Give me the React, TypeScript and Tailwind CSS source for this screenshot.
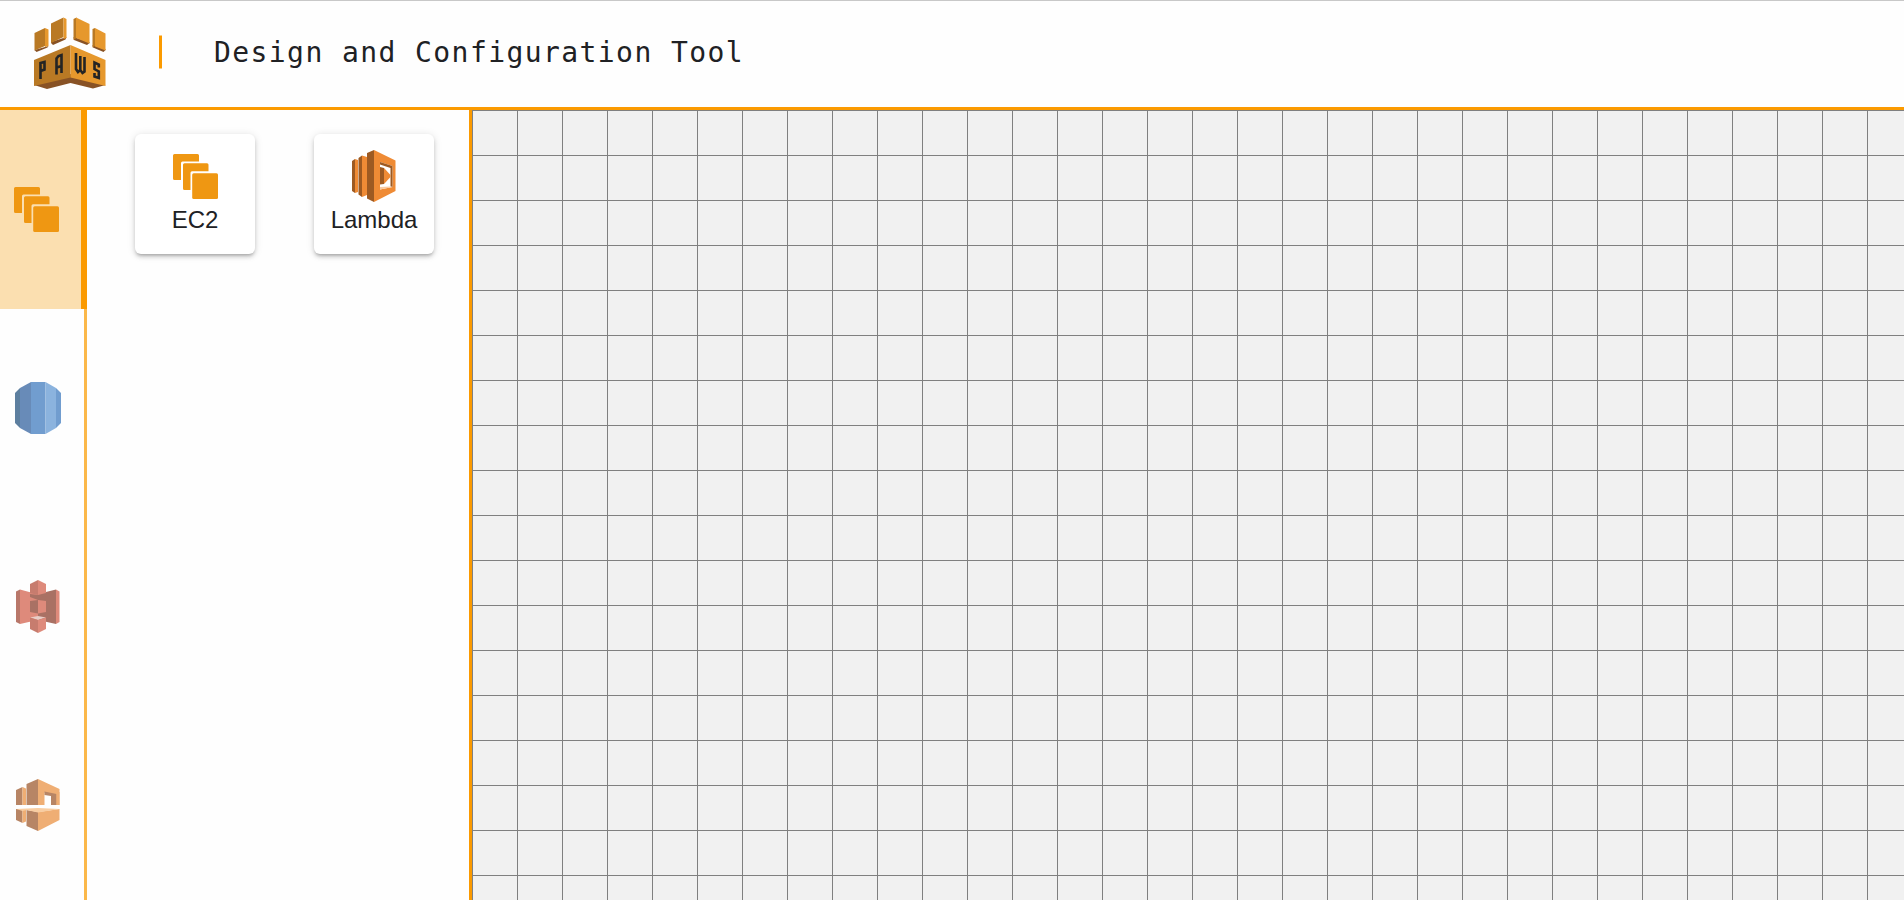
import type { ReactNode } from 'react';

const ORANGE = '#ef9712';

function Ec2Icon() {
  return (
    <svg className="block h-[46px] w-[46px]" viewBox="0 0 46 46" fill={ORANGE}>
      <path d="M1.500 0H24.500Q26 0 26 1.500V7.500H9.500Q8 7.500 8 9V26H1.500Q0 26 0 24.500V1.500Q0 0 1.500 0Z" />
      <path d="M11.500 9.300H34Q35.500 9.300 35.500 10.800V17.300H19Q17.500 17.300 17.500 18.800V36H11.500Q10 36 10 34.500V10.800Q10 9.300 11.500 9.300Z" />
      <rect x="19.200" y="19.200" width="25.800" height="25.800" rx="1.500" />
    </svg>
  );
}

function LambdaIcon() {
  return (
    <svg className="block h-[52px] w-[44px]" viewBox="0 0 44 52">
      <path fill="#9d5a22" d="M0 11L3 9V43L0 41ZM6.500 8L10 5.500V47L6.500 44.500ZM15 3L22 0V52L15 48.500Z" />
      <path fill="#ef8b35" d="M3 9L6 10V42L3 43ZM10 5.500L15 7V45L10 47Z" />
      <path fill="#ef8b35" fillRule="evenodd" d="M22 0L43.500 10.500V41L22 52ZM28 12V39.500L40.500 37V16Z" />
      <path fill="#9d5a22" d="M28 12L40.500 16V37L38.500 36.500V18L28 14.500ZM28 17L32 18V34L28 34.500Z" />
      <path fill="#ef8b35" d="M32 18L38.500 25V27L32 34Z" />
      <path fill="#f9caa0" d="M28 37L38.500 36.500L40.500 37L28 39.500Z" />
    </svg>
  );
}

function DatabaseIcon() {
  return (
    <svg className="block h-[52px] w-[46px]" viewBox="0 0 46 52">
      <path fill="#5d7f9f" d="M0 11L5 6V46L0 41Z" />
      <path fill="#688bb8" d="M5 6L16 0V52L5 46Z" />
      <path fill="#719dcf" d="M16 0H30.500V52H16Z" />
      <path fill="#8bb3de" d="M30.500 0L41 6V46L30.500 52Z" />
      <path fill="#719dcf" d="M41 6L46 11V41L41 46Z" />
    </svg>
  );
}

function StorageIcon() {
  return (
    <svg className="ml-px block h-[53px] w-[44px]" viewBox="0 0 44 53">
      <path fill="#b8776a" d="M0 11.500L4 9.500V44L0 42Z" />
      <path fill="#de8a7b" d="M4 9.500L15 12.500V41.500L4 44Z" />
      <path fill="#de8a7b" d="M14 12L22 14V40L14 42Z" />
      <path fill="#a97164" d="M22 14L40 9.500V44L22 40Z" />
      <path fill="#de8a7b" d="M40 9.500L43.500 11.500V42L40 44Z" />
      <path fill="#a97164" d="M14 14L22 15L30 17V19L22 20L14 17Z" />
      <path fill="#c77c6e" d="M14 4L22 0V15L14 13Z" />
      <path fill="#de8a7b" d="M22 0L30 4V13L22 15Z" />
      <path fill="#a97164" d="M14 21L22 20V33.500L14 32Z" />
      <path fill="#de8a7b" d="M22 20L30 21V32L22 33.500Z" />
      <path fill="#e8cdc6" d="M14 37.500L22 36L30 37.500L22 40Z" />
      <path fill="#c77c6e" d="M14 37.500L22 40V53L14 49Z" />
      <path fill="#de8a7b" d="M30 37.500L22 40V53L30 49Z" />
    </svg>
  );
}

function NetworkIcon() {
  return (
    <svg className="ml-px block h-[52px] w-[44px]" viewBox="0 0 44 52">
      <path fill="#b78565" d="M0 11L6.500 8V26H0ZM10.500 5L22 0V26H10.500ZM0 30H6.500V44L0 41ZM10.500 31L22 33V52L10.500 47Z" />
      <path fill="#efae74" d="M6.500 8L10 9.500V26H6.500ZM6.500 30H10V42.500L6.500 44ZM22 33L43.500 30V41L22 52Z" />
      <path fill="#efae74" d="M22 0L43.500 10V26H35V16L28.500 13.500V26H22Z" />
      <path fill="#b78565" d="M28.500 12.500L40.500 15V26H35V17L28.500 16Z" />
      <path fill="#efae74" d="M40.500 13H43.500V26H40.500Z" />
      <path fill="#f8cda2" d="M0 30L22 29L43.500 30L22 33.500L10.500 31L6.500 32Z" />
    </svg>
  );
}

function PawsLogo() {
  return (
    <svg className="block h-[74px] w-[74px] -translate-y-px" viewBox="33 16 74 74" role="img" aria-label="PAWS">
      <g fill="#885225">
        <path d="M34.500 50L36.500 52L47.500 47.500L48.500 46L34.500 50Z" />
        <path d="M51 43L53 45L65.500 39.500L66.500 37L51 42Z" />
        <path d="M89.500 43L87 45L74 40L73.500 37L89.500 42Z" />
        <path d="M105.500 50L103.500 52L93 47.500L92.500 45L105.500 49Z" />
        <path d="M34 85L47 89L70.500 83L93 88.500L105.500 85L70.500 74Z" />
      </g>
      <g fill="#b97924">
        <path d="M34.500 33L45 28V46L34.500 50.500Z" />
        <path d="M51 23.500L63.500 17.500V37L51 43Z" />
        <path d="M34 60L70.500 45V77.500L34 86Z" />
        <path d="M73.500 19L76.500 17.500V38L73.500 40ZM92.500 29L95 28V46L92.500 47.500Z" />
      </g>
      <g fill="#e6982d">
        <path d="M45 28L48.500 29.500V46L45 47ZM63.500 17.500L66.500 19V38L63.500 39Z" />
        <path d="M76 17.500L89.500 24V43.500L76 38Z" />
        <path d="M95 28L105.500 33.500V50.500L95 46.500Z" />
        <path d="M70.500 45L105.500 60V86L70.500 77.500Z" />
      </g>
      <g fill="none" stroke="#242424" strokeWidth="2.600">
        <path d="M40.500 79V63L44.500 62V69.500L40.500 71" />
        <path d="M56.500 74.500V58.500L58.500 56L61.500 55V73M56.500 67.500L61.500 66" />
        <path d="M76 53V69L78 72L80.300 70V56M80.300 70L82.500 73L84.500 71.500V57" />
        <path d="M98.800 67.500V64.500L94.500 62.500V69L98.800 71.500V78L94.500 76.500V73" />
      </g>
    </svg>
  );
}

function Tab({ active = false, children }: { active?: boolean; children: ReactNode }) {
  return (
    <button
      className={
        active
          ? 'flex h-[199px] w-[87px] shrink-0 items-center border-r-[6px] border-[#fb9a00] bg-[#fbdfb0] pl-3.5'
          : 'flex h-[198.500px] w-[87px] shrink-0 items-center border-r-[3px] border-[#fbb84a] pl-[15px]'
      }
    >
      {children}
    </button>
  );
}

function ServiceCard({ label, children }: { label: string; children: ReactNode }) {
  return (
    <div className="flex h-[120px] w-[120px] flex-col items-center rounded-md bg-white pt-4 shadow-[0_3px_3px_-2px_rgba(0,0,0,0.2),0_3px_4px_0_rgba(0,0,0,0.14),0_1px_8px_0_rgba(0,0,0,0.12)]">
      <div className="flex h-[52px] items-center justify-center">{children}</div>
      <div className="mt-1 text-2xl leading-[28px] text-[#202124]">{label}</div>
    </div>
  );
}

export default function App() {
  return (
    <div className="flex h-[900px] w-full flex-col overflow-hidden bg-[#fefefe] font-['Liberation_Sans',sans-serif]">
      <header className="flex h-[110px] shrink-0 items-center border-t border-b-[3px] border-t-[#c8c8c8] border-b-[#fb9a00] pl-[33px]">
        <PawsLogo />
        <div className="ml-[52px] h-[33px] w-[3px] -translate-y-[2.500px] bg-[#fb9a00]" />
        <h1 className="ml-[52px] -translate-y-px font-['DejaVu_Sans_Mono',monospace] text-[28px] leading-9 tracking-[1.420px] whitespace-pre text-[#202124]">
          Design and Configuration Tool
        </h1>
      </header>
      <div className="flex min-h-0 flex-1">
        <nav className="flex w-[87px] shrink-0 flex-col overflow-hidden">
          <Tab active>
            <Ec2Icon />
          </Tab>
          <Tab>
            <DatabaseIcon />
          </Tab>
          <Tab>
            <StorageIcon />
          </Tab>
          <Tab>
            <NetworkIcon />
          </Tab>
        </nav>
        <aside className="flex w-[382px] shrink-0 items-start gap-[59px] pt-6 pl-12">
          <ServiceCard label="EC2">
            <div className="pt-px pl-0.5">
              <Ec2Icon />
            </div>
          </ServiceCard>
          <ServiceCard label="Lambda">
            <LambdaIcon />
          </ServiceCard>
        </aside>
        <main className="flex-1 border-l-[3px] border-[#fb9a00] bg-[#f1f1f1] bg-[linear-gradient(to_right,#808080_1px,transparent_1px),linear-gradient(to_bottom,#808080_1px,transparent_1px)] bg-size-[45px_45px]" />
      </div>
    </div>
  );
}
